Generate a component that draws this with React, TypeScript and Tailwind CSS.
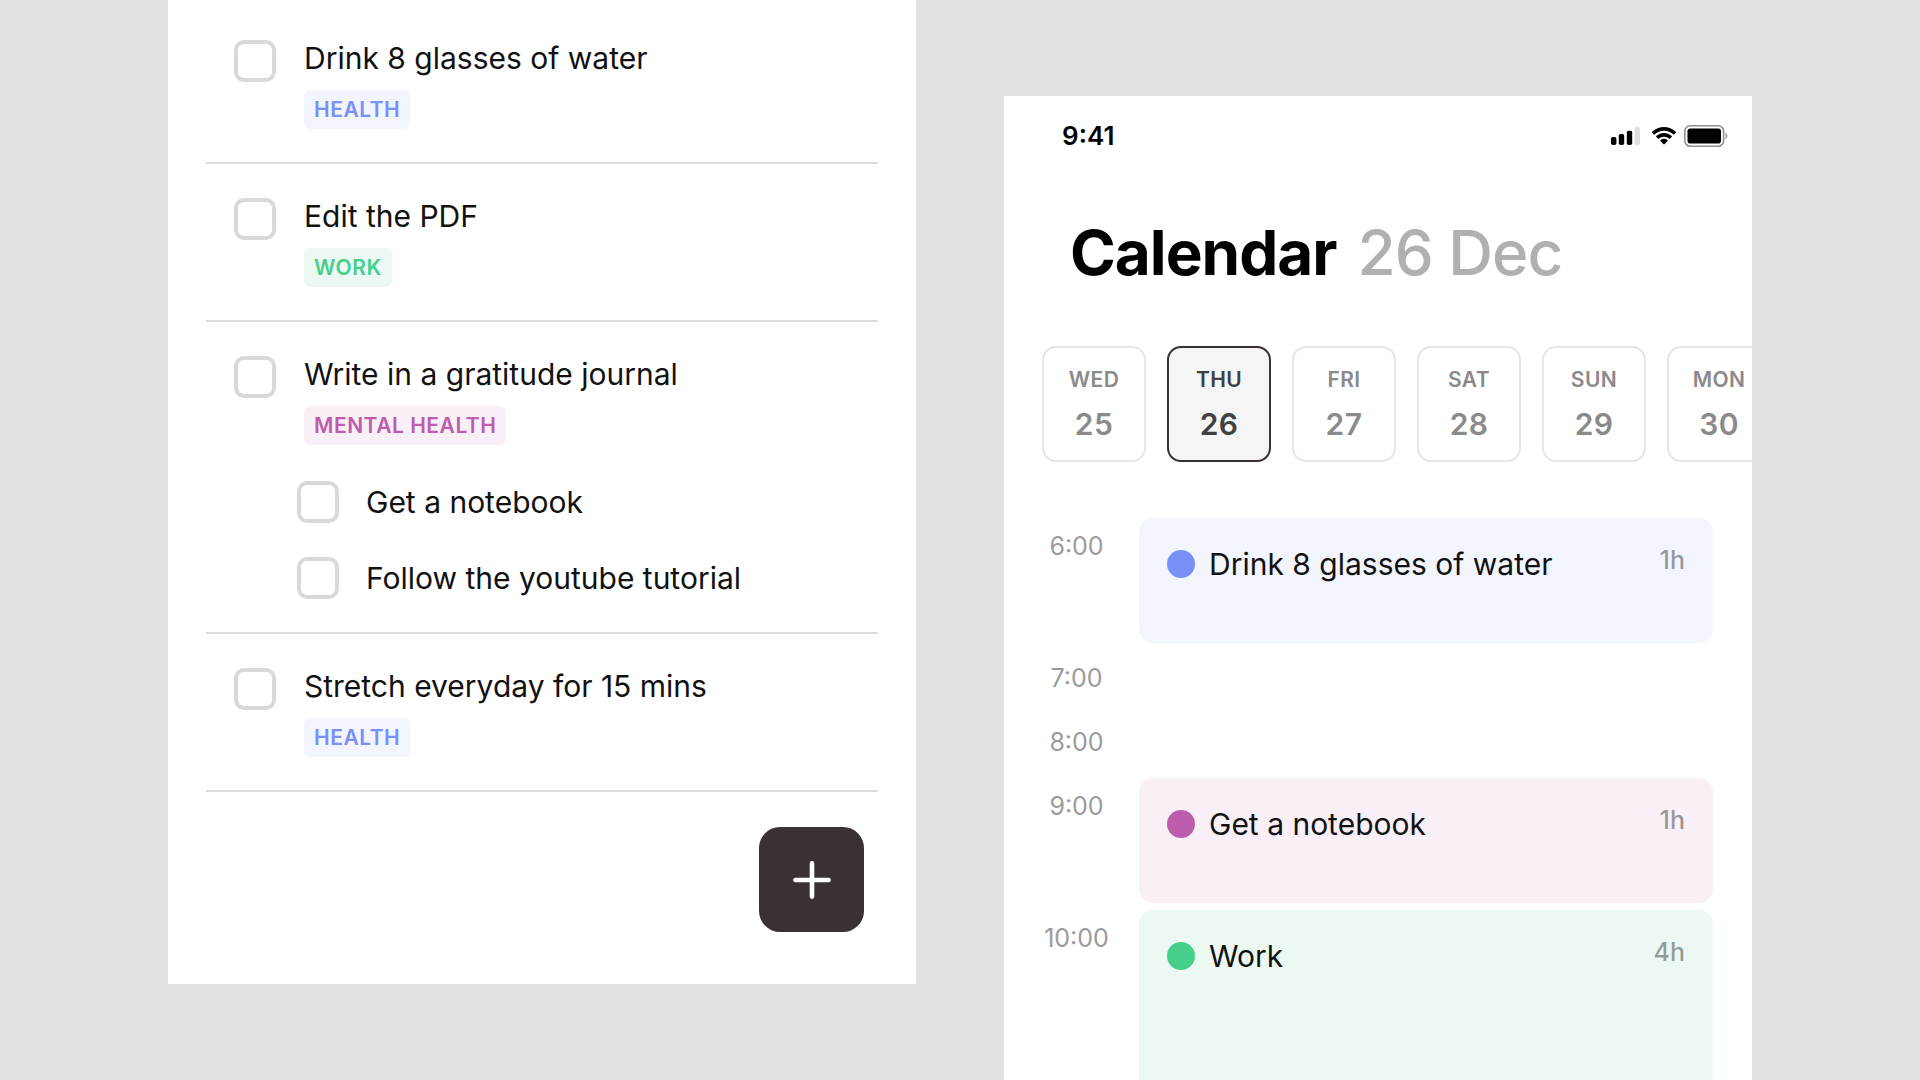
import { useState } from 'react';
import clsx from 'clsx';

type Category = 'health' | 'work' | 'mental';

interface Task {
  id: string;
  title: string;
  tag?: Category;
  subtasks?: Task[];
}

interface Slot {
  time: string;
  event?: {
    title: string;
    category: Category;
    duration: string;
    tall?: boolean;
  };
}

const TASKS: Task[] = [
  { id: 'water', title: 'Drink 8 glasses of water', tag: 'health' },
  { id: 'pdf', title: 'Edit the PDF', tag: 'work' },
  {
    id: 'journal',
    title: 'Write in a gratitude journal',
    tag: 'mental',
    subtasks: [
      { id: 'notebook', title: 'Get a notebook' },
      { id: 'tutorial', title: 'Follow the youtube tutorial' },
    ],
  },
  { id: 'stretch', title: 'Stretch everyday for 15 mins', tag: 'health' },
];

const DAYS = [
  { name: 'WED', date: 25 },
  { name: 'THU', date: 26 },
  { name: 'FRI', date: 27 },
  { name: 'SAT', date: 28 },
  { name: 'SUN', date: 29 },
  { name: 'MON', date: 30 },
];

const SLOTS: Slot[] = [
  { time: '6:00', event: { title: 'Drink 8 glasses of water', category: 'health', duration: '1h' } },
  { time: '7:00' },
  { time: '8:00' },
  { time: '9:00', event: { title: 'Get a notebook', category: 'mental', duration: '1h' } },
  { time: '10:00', event: { title: 'Work', category: 'work', duration: '4h', tall: true } },
];

const CATEGORIES = {
  health: { label: 'HEALTH', tag: 'bg-[#f2f4fe] text-[#7990f8]', card: 'bg-[#f2f4fe]', dot: 'bg-[#7990f8]' },
  work: { label: 'WORK', tag: 'bg-[#ecf9f2] text-[#46cf8b]', card: 'bg-[#ecf9f2]', dot: 'bg-[#46cf8b]' },
  mental: { label: 'MENTAL HEALTH', tag: 'bg-[#f9eff7] text-[#bc5dae]', card: 'bg-[#f9eff7]', dot: 'bg-[#bc5dae]' },
};

function Checkbox({ id }: { id: string }) {
  return (
    <input
      id={id}
      type="checkbox"
      className="size-[42px] shrink-0 appearance-none rounded-[10px] border-4 border-[#d9d9d9] bg-white checked:bg-[#d9d9d9]"
    />
  );
}

function TaskRow({ task }: { task: Task }) {
  return (
    <li className="border-b-2 border-[#dcdcdc] px-7 pt-[34px] pb-[33px] first:pt-10">
      <div className="flex items-start gap-7">
        <Checkbox id={task.id} />
        <div className="flex flex-col items-start gap-3.5">
          <label htmlFor={task.id} className="text-[30px] leading-9">
            {task.title}
          </label>
          {task.tag && (
            <span
              className={clsx(
                'rounded-md px-2.5 text-[21px] leading-[39px] font-semibold tracking-wide',
                CATEGORIES[task.tag].tag,
              )}
            >
              {CATEGORIES[task.tag].label}
            </span>
          )}
        </div>
      </div>
      {task.subtasks && (
        <ul className="mt-9 ml-[63px] flex flex-col gap-[34px]">
          {task.subtasks.map(sub => (
            <li key={sub.id} className="flex items-center gap-[27px]">
              <Checkbox id={sub.id} />
              <label htmlFor={sub.id} className="text-[30px] leading-9">
                {sub.title}
              </label>
            </li>
          ))}
        </ul>
      )}
    </li>
  );
}

function TaskPanel() {
  return (
    <section className="self-start bg-white">
      <ul className="mx-[38px]">
        {TASKS.map(task => (
          <TaskRow key={task.id} task={task} />
        ))}
      </ul>
      <div className="flex justify-end px-[52px] pt-[35px] pb-[52px]">
        <button
          type="button"
          aria-label="Add task"
          className="flex size-[105px] items-center justify-center rounded-[21px] bg-[#3a3232] text-white"
        >
          <svg width="38" height="38" viewBox="0 0 38 38" fill="none" stroke="currentColor" strokeWidth="4.6" strokeLinecap="round">
            <path d="M19 2.4v33.2M2.4 19h33.2" />
          </svg>
        </button>
      </div>
    </section>
  );
}

function StatusBar() {
  return (
    <div className="flex h-20 items-center justify-between pr-6 pl-[58px]">
      <span className="text-[26px] leading-8 font-semibold text-black">9:41</span>
      <div className="flex items-center gap-[11px]">
        <svg width="29" height="18" viewBox="0 0 29 18">
          <rect x="0" y="10" width="5.4" height="8" rx="1.8" />
          <rect x="7.8" y="7" width="5.4" height="11" rx="1.8" />
          <rect x="15.8" y="3.8" width="5.4" height="14.2" rx="1.8" />
          <rect x="23.6" y="0" width="5.4" height="18" rx="1.8" fill="#dedede" />
        </svg>
        <svg width="26" height="18" viewBox="0 0 26 18">
          <path d="M13 3.7c3.6 0 6.9 1.4 9.4 3.7.2.2.5.2.7 0l1.8-1.9c.2-.2.2-.5 0-.7-6.6-6.4-17.2-6.4-23.8 0-.2.2-.2.5 0 .7l1.8 1.9c.2.2.5.2.7 0C6.100 5.1 9.4 3.7 13 3.7z" />
          <path d="M13 9.7c2 0 3.9.7 5.3 2 .2.2.5.2.7 0l1.8-1.9c.2-.2.2-.5 0-.7-4.4-4.2-11.2-4.2-15.6 0-.2.2-.2.5 0 .7L7 11.700c.2.2.5.2.7 0 1.4-1.3 3.3-2 5.3-2z" />
          <path d="M16.6 13.9c.2-.2.2-.5 0-.7-2.1-1.8-5.1-1.8-7.2 0-.2.2-.2.5 0 .7l3.2 3.3c.2.2.6.2.8 0z" />
        </svg>
        <svg width="44" height="22" viewBox="0 0 44 22" className="-ml-1">
          <rect x="0.8" y="0.8" width="38.8" height="20.4" rx="5.5" fill="none" stroke="#909094" strokeWidth="1.6" />
          <rect x="3.5" y="3.5" width="33.5" height="15" rx="2.8" />
          <path d="M41.5 7.5c2.4 1.2 2.4 5.8 0 7z" fill="#a0a0a4" />
        </svg>
      </div>
    </div>
  );
}

function DayPicker() {
  const [selected, setSelected] = useState(26);

  return (
    <div className="mt-[55px] flex gap-[21px] overflow-hidden pl-[38px]">
      {DAYS.map(day => (
        <button
          key={day.date}
          type="button"
          onClick={() => setSelected(day.date)}
          className={clsx(
            'flex h-[116px] w-[104px] shrink-0 flex-col items-center justify-center gap-2 rounded-[14px] border-2 tracking-wide',
            day.date === selected
              ? 'border-[#3a3232] bg-[#f5f5f5] text-[#404040]'
              : 'border-[#e6e6e6] bg-white text-[#8a8a8a]',
          )}
        >
          <span className="text-[21px] leading-8 font-semibold">{day.name}</span>
          <span className="text-[30px] leading-10 font-semibold">{day.date}</span>
        </button>
      ))}
    </div>
  );
}

function Schedule() {
  return (
    <ol className="mt-14 flex flex-col gap-[7px] pr-[39px] pl-[38px]">
      {SLOTS.map(({ time, event }) => (
        <li key={time} className="flex gap-7">
          <time className="w-[69px] shrink-0 text-center text-[25px] leading-[57px] text-[#9b9b9b]">{time}</time>
          {event && (
            <div
              className={clsx(
                'flex flex-1 items-start rounded-[14px] px-7',
                event.tall ? 'h-[500px]' : 'h-[125px]',
                CATEGORIES[event.category].card,
              )}
            >
              <span className={clsx('mt-8 mr-3.5 size-7 rounded-full', CATEGORIES[event.category].dot)} />
              <span className="mt-7 flex-1 text-[30px] leading-9">{event.title}</span>
              <span className="mt-7 text-[25px] leading-7 font-medium text-black/40">{event.duration}</span>
            </div>
          )}
        </li>
      ))}
    </ol>
  );
}

function CalendarPanel() {
  return (
    <section className="mt-24 overflow-hidden bg-white">
      <StatusBar />
      <h1 className="mt-[39px] flex gap-[21px] pl-[66px] text-[62px] leading-[76px] font-bold tracking-[-1px] whitespace-nowrap text-black">
        Calendar <span className="font-medium text-[#b0b0b0]">26 Dec</span>
      </h1>
      <DayPicker />
      <Schedule />
    </section>
  );
}

export default function App() {
  return (
    <main className="grid h-screen grid-cols-2 gap-[88px] overflow-hidden bg-[#e1e1e1] px-42 font-['Inter',sans-serif] text-[#111111]">
      <TaskPanel />
      <CalendarPanel />
    </main>
  );
}
